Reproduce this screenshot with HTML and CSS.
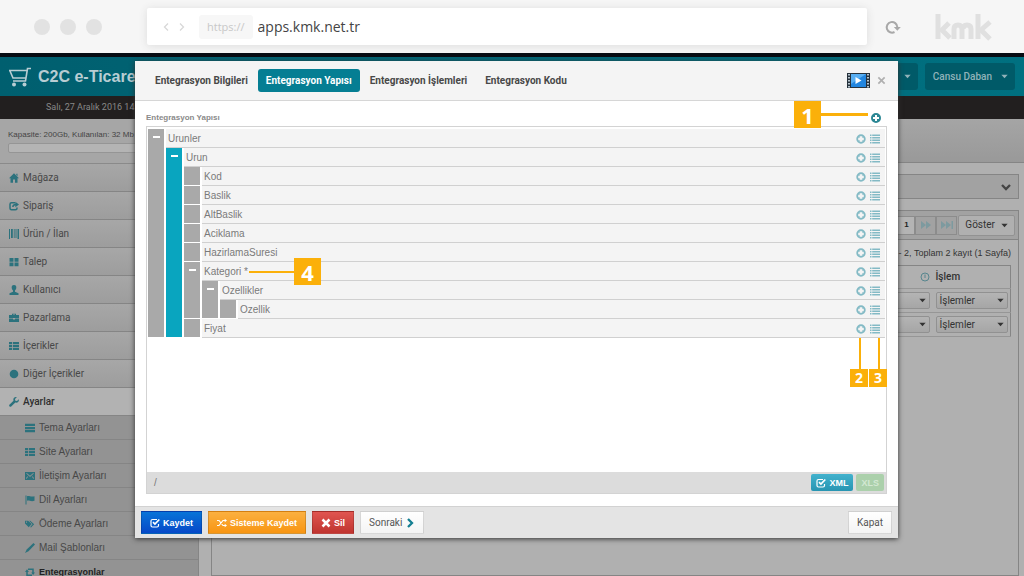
FILE: index.html
```html
<!DOCTYPE html>
<html lang="tr">
<head>
<meta charset="utf-8">
<title>C2C e-Ticaret</title>
<link rel="stylesheet" href="styles.css">
</head>
<body>
<svg class="sprite" aria-hidden="true">
  <symbol id="plus" viewBox="0 0 10 10"><path fill-rule="evenodd" d="M5 0a5 5 0 1 0 0 10A5 5 0 0 0 5 0zM4 2h2v2h2v2H6v2H4V6H2V4h2z"/></symbol>
  <symbol id="plus-open" viewBox="0 0 10 10"><path fill-rule="evenodd" d="M5 .3a4.700 4.700 0 1 0 0 9.400A4.700 4.700 0 0 0 5 .3zM3.700 2.200h2.600v1.500h1.500v2.600H6.300v1.500H3.700V6.300H2.200V3.700h1.500z"/></symbol>
  <symbol id="list" viewBox="0 0 10 10"><path d="M0 .5h1.500v1.500H0zM2.200 .5H10v1.500H2.200zM0 3h1.500v1.500H0zM2.200 3H10v1.500H2.200zM0 5.500h1.500V7H0zM2.200 5.500H10V7H2.200zM0 8h1.500v1.500H0zM2.200 8H10v1.500H2.200z"/></symbol>
  <symbol id="home" viewBox="0 0 10 10"><path d="M5 .3 10 5.300H8.500V9.700H6V6.500H4v3.200H1.500V5.300H0zM7.300.8h1.200v2.500L7.300 2z"/></symbol>
  <symbol id="share" viewBox="0 0 10 10"><path d="M6 1.800H2.500Q1 1.800 1 3.300v4Q1 8.800 2.500 8.800h4Q8 8.800 8 7.300V6.500M3.800 6Q4 3.500 7 3.500" fill="none" stroke="currentColor" stroke-width="1.500"/><path d="M6.300.8 10 3.500 6.300 6.200z"/></symbol>
  <symbol id="barcode" viewBox="0 0 10 10"><path d="M0 0h1v10H0zM2 0h1.800v9H2zM4.800 0h.8v9h-.8zM6.500 0h1v9h-1zM8.500 0H10v10H8.500z"/></symbol>
  <symbol id="grid" viewBox="0 0 10 10"><path d="M.5 1h4v3.700h-4zM5.500 1h4v3.700h-4zM.5 5.500h4v3.700h-4zM5.500 5.500h4v3.700h-4z"/></symbol>
  <symbol id="user" viewBox="0 0 10 10"><path d="M5 0c1.800 0 2.500 1.300 2.300 2.800C7.200 4.200 6.500 5 6 5.500v1.200l3.500 1.600V10h-9V8.300L4 6.700V5.500C3.500 5 2.800 4.200 2.700 2.800 2.500 1.300 3.200 0 5 0z"/></symbol>
  <symbol id="case" viewBox="0 0 10 10"><path fill-rule="evenodd" d="M3 2V.7h4V2h3v3H0V2zM4 1.500V2h2v-.5zM0 5.500h4V6.500h2V5.500h4V9H0z"/></symbol>
  <symbol id="thlist" viewBox="0 0 10 10"><path d="M0 1h3v2.200H0zM3.800 1H10v2.200H3.800zM0 3.900h3v2.200H0zM3.800 3.900H10v2.200H3.800zM0 6.800h3V9H0zM3.800 6.800H10V9H3.800z"/></symbol>
  <symbol id="dot" viewBox="0 0 10 10"><circle cx="5" cy="5" r="4.300"/></symbol>
  <symbol id="wrench" viewBox="0 0 10 10"><path d="M9.800 2.200 8 4 6.300 3.700 6 2 7.800.2C5.500-.4 3.800 1.500 4.500 3.700L.4 7.800c-.9 1 .8 2.700 1.800 1.800l4.100-4.100c2.200.7 4.100-1 3.500-3.300z"/></symbol>
  <symbol id="server" viewBox="0 0 10 10"><path d="M0 .8h10v2.300H0zM0 3.900h10v2.300H0zM0 7h10v2.300H0z"/></symbol>
  <symbol id="mail" viewBox="0 0 10 10"><path fill-rule="evenodd" d="M0 1h10v8H0zM1.200 2.500 5 6l3.800-3.500-.6-.5L5 4.700 1.800 2zM1.200 8l2-2.200-.5-.5L1 7zM8.800 8l-2-2.200.5-.5L9 7z"/></symbol>
  <symbol id="flag" viewBox="0 0 10 10"><path d="M.5.500h1V9.500h-1zM2 1.200c2-1 3.500 1 7.500 0v4.600c-4 1.200-5.500-1-7.500 0z"/></symbol>
  <symbol id="tags" viewBox="0 0 12 10"><path fill-rule="evenodd" d="M0 1h3.800l4.200 4L4.500 8.800 0 4.500zM1.800 2a.7.700 0 1 0 .1 0z"/><path d="M5 1h1.300l4.700 4.300-3.800 4-1-.8L9 5.300z"/></symbol>
  <symbol id="pencil" viewBox="0 0 10 10"><path d="M8.500 0 10 1.500 3.500 8.200 0 10l1.700-3.500z"/></symbol>
  <symbol id="retweet" viewBox="0 0 10 10"><path d="M3 2.200h5V6M7 8.200H2V4.500" fill="none" stroke="currentColor" stroke-width="1.500"/><path d="M6.200 5.500H10L8.100 8zM0 5h3.900L2 2.300z"/></symbol>
  <symbol id="check" viewBox="0 0 10 10"><path d="M7 1.500H2.500Q1 1.500 1 3v4.500Q1 9 2.500 9H7q1.500 0 1.500-1.500V6" fill="none" stroke="currentColor" stroke-width="1.200"/><path d="M3 4.200 4.900 6 9.300 1.500" fill="none" stroke="currentColor" stroke-width="1.700"/></symbol>
  <symbol id="shuffle" viewBox="0 0 10 10"><path d="M0 2.500h2L6 7.500h2.500M0 7.500h2L6 2.500h2.500" fill="none" stroke="currentColor" stroke-width="1.200"/><path d="M7.700.7 10 2.500 7.700 4.300zM7.700 5.700 10 7.500 7.700 9.300z"/></symbol>
  <symbol id="cross" viewBox="0 0 10 10"><path d="m1.500 1.500 7 7m0-7-7 7" fill="none" stroke="currentColor" stroke-width="2.500"/></symbol>
  <symbol id="cross-thin" viewBox="0 0 10 10"><path d="m1.500 1.500 7 7m0-7-7 7" fill="none" stroke="currentColor" stroke-width="1.900"/></symbol>
  <symbol id="chev" viewBox="0 0 10 10"><path d="m3 1 4 4-4 4" fill="none" stroke="currentColor" stroke-width="2.300"/></symbol>
  <symbol id="thin" viewBox="0 0 10 10"><path d="M3 1.500 6.500 5 3 8.500" fill="none" stroke="currentColor" stroke-width="1.300"/></symbol>
  <symbol id="caret" viewBox="0 0 10 10"><path d="M.5 2.500h9L5 7.500z"/></symbol>
</svg>

<header class="browser">
  <div class="dots"><i></i><i></i><i></i></div>
  <div class="address">
    <button class="nav-arrow" aria-label="Geri"><svg class="icon flip"><use href="#thin"/></svg></button>
    <button class="nav-arrow" aria-label="İleri"><svg class="icon"><use href="#thin"/></svg></button>
    <label class="scheme" for="url">https://</label>
    <input id="url" class="url" type="text" value="apps.kmk.net.tr">
  </div>
  <button class="reload" aria-label="Yenile"><svg viewBox="0 0 16 16"><path d="M9.500 13A5.300 5.300 0 1 1 12.300 8" fill="none" stroke="currentColor" stroke-width="2"/><path d="M8.800 8h7l-3.500 3.700z"/></svg></button>
  <svg class="logo" viewBox="0 0 58 28" role="img" aria-label="kmk"><g fill="none" stroke="currentColor" stroke-width="5"><path d="M3 1v25"/><path d="m14 10-7 7 8 8"/><path d="M19 26V16q0-4 4-4t4 4v10M28 16q0-4 4-4t4 4v10"/><path d="M43 1v25"/><path d="m55 9-9 8 9 9"/></g></svg>
</header>

<div class="app">
  <div class="topbar">
    <svg class="cart" viewBox="0 0 24 20"><path d="M23 1.500h-3.500L17.500 14H5M1 3.500h18M2 4l3 7h13" fill="none" stroke="currentColor" stroke-width="1.600"/><circle cx="6" cy="17.500" r="2"/><circle cx="16.500" cy="17.500" r="2"/></svg>
    <h1 class="brand">C2C e-Ticaret</h1>
    <button class="top-btn short" aria-label="Menü"><svg class="caret"><use href="#caret"/></svg></button>
    <button class="top-btn">Cansu Daban <svg class="caret"><use href="#caret"/></svg></button>
  </div>
  <div class="datebar">Salı, 27 Aralık 2016 14:25</div>
  <div class="columns">
    <aside class="sidebar">
      <div class="capacity"><span>Kapasite: 200Gb, Kullanılan: 32 Mb</span><div class="meter"></div></div>
      <nav>
        <a href="#" class="item"><svg class="icon"><use href="#home"/></svg>Mağaza</a>
        <a href="#" class="item"><svg class="icon"><use href="#share"/></svg>Sipariş</a>
        <a href="#" class="item"><svg class="icon"><use href="#barcode"/></svg>Ürün / İlan</a>
        <a href="#" class="item"><svg class="icon"><use href="#grid"/></svg>Talep</a>
        <a href="#" class="item"><svg class="icon"><use href="#user"/></svg>Kullanıcı</a>
        <a href="#" class="item"><svg class="icon"><use href="#case"/></svg>Pazarlama</a>
        <a href="#" class="item"><svg class="icon"><use href="#thlist"/></svg>İçerikler</a>
        <a href="#" class="item"><svg class="icon"><use href="#dot"/></svg>Diğer İçerikler</a>
        <a href="#" class="item open"><svg class="icon"><use href="#wrench"/></svg>Ayarlar</a>
        <a href="#" class="sub"><svg class="icon"><use href="#server"/></svg>Tema Ayarları</a>
        <a href="#" class="sub"><svg class="icon"><use href="#thlist"/></svg>Site Ayarları</a>
        <a href="#" class="sub"><svg class="icon"><use href="#mail"/></svg>İletişim Ayarları</a>
        <a href="#" class="sub"><svg class="icon"><use href="#flag"/></svg>Dil Ayarları</a>
        <a href="#" class="sub"><svg class="icon"><use href="#tags"/></svg>Ödeme Ayarları</a>
        <a href="#" class="sub"><svg class="icon"><use href="#pencil"/></svg>Mail Şablonları</a>
        <a href="#" class="sub current"><svg class="icon"><use href="#retweet"/></svg>Entegrasyonlar</a>
      </nav>
    </aside>
    <main class="content">
      <div class="heading"></div>
      <div class="panels">
        <button class="filter" aria-label="Filtre"><svg class="icon down"><use href="#chev"/></svg></button>
        <section class="results">
          <div class="pager">
            <button class="page on">1</button>
            <button class="page" aria-label="Sonraki sayfa"><svg viewBox="0 0 12 10"><path d="m1 1 5 4-5 4zM6 1l5 4-5 4z"/></svg></button>
            <button class="page" aria-label="Son sayfa"><svg viewBox="0 0 12 10"><path d="m0 1 5 4-5 4zM5 1l5 4-5 4zM10.500 1H12v8h-1.500z"/></svg></button>
            <button class="show">Göster <svg class="caret"><use href="#caret"/></svg></button>
          </div>
          <p class="count">1 - 2, Toplam 2 kayıt (1 Sayfa)</p>
          <table class="grid">
            <thead><tr><th></th><th><svg class="icon clock" viewBox="0 0 10 10"><circle cx="5" cy="5" r="4" fill="none" stroke="currentColor"/><path d="M4.500 2.500h1V6h-1z"/></svg></th><th>İşlem</th></tr></thead>
            <tbody>
              <tr><td></td><td><button class="drop" aria-label="Durum"><span></span><svg class="caret"><use href="#caret"/></svg></button></td><td><button class="drop">İşlemler <svg class="caret"><use href="#caret"/></svg></button></td></tr>
              <tr><td></td><td><button class="drop" aria-label="Durum"><span></span><svg class="caret"><use href="#caret"/></svg></button></td><td><button class="drop">İşlemler <svg class="caret"><use href="#caret"/></svg></button></td></tr>
            </tbody>
          </table>
        </section>
      </div>
    </main>
  </div>

  <div class="modal" role="dialog" aria-label="Entegrasyon">
    <div class="modal-head">
      <button class="tab">Entegrasyon Bilgileri</button>
      <button class="tab active">Entegrasyon Yapısı</button>
      <button class="tab">Entegrasyon İşlemleri</button>
      <button class="tab">Entegrasyon Kodu</button>
      <svg class="video" viewBox="0 0 23 15"><path fill="#26323d" d="M0 0h23v15H0z"/><path fill="#2286e0" d="M4 1h15v13H4z"/><path fill="#58aef2" d="M4 1h15L4 11z"/><path fill="#fff" d="m8.500 4 6 3.500-6 3.500z"/><path d="M2 1v14M21 1v14" stroke="#b8c6d0" stroke-width="2" stroke-dasharray="1.500 1.500"/></svg>
      <button class="close" aria-label="Kapat"><svg class="icon"><use href="#cross-thin"/></svg></button>
    </div>
    <div class="modal-body">
      <div class="label-row">
        <span>Entegrasyon Yapısı</span>
        <span class="note note-1">1</span>
        <button class="act strong" aria-label="Ekle"><svg class="icon"><use href="#plus"/></svg></button>
      </div>
      <div class="editor">
        <ul class="tree" id="tree"></ul>
        <div class="status"><span>/</span>
          <button class="fmt xml"><svg class="icon"><use href="#check"/></svg>XML</button>
          <button class="fmt xls">XLS</button>
        </div>
      </div>
    </div>
    <div class="modal-foot">
      <button class="btn blue"><svg class="icon"><use href="#check"/></svg>Kaydet</button>
      <button class="btn orange"><svg class="icon"><use href="#shuffle"/></svg>Sisteme Kaydet</button>
      <button class="btn red"><svg class="icon"><use href="#cross"/></svg>Sil</button>
      <button class="btn plain">Sonraki<svg class="icon teal"><use href="#chev"/></svg></button>
      <button class="btn plain last">Kapat</button>
    </div>
  </div>
</div>
<script src="tree.js"></script>
</body>
</html>
```
FILE: styles.css
```css
* { box-sizing: border-box; }
body { margin: 0; height: 100vh; overflow: hidden; display: flex; flex-direction: column; background: #b0b0b0; color: #444; font: 10px/12px "Liberation Sans", Arial, sans-serif; }
button { font: inherit; color: inherit; border: 0; background: none; padding: 0; margin: 0; display: inline-flex; align-items: center; white-space: nowrap; }
ul { list-style: none; margin: 0; padding: 0; }
a { color: inherit; text-decoration: none; }
svg { fill: currentColor; flex: none; }
.sprite { position: absolute; width: 0; height: 0; }
.icon { width: 10px; height: 10px; }
.caret { width: 7px; height: 7px; }
.flip { transform: scaleX(-1); }
.down { transform: rotate(90deg); }

.browser { display: flex; align-items: center; height: 53px; flex: none; background: #f6f6f6; padding: 0 31px 0 34px; }
.dots { display: flex; gap: 10px; width: 113px; flex: none; }
.dots i { width: 16px; height: 16px; border-radius: 50%; background: #e2e2e2; }
.address { flex: 1; display: flex; align-items: center; height: 37px; padding-left: 14px; background: #fff; border-radius: 2px; box-shadow: 0 1px 8px #dcdcdc; }
.nav-arrow { color: #d8d8d8; width: 16px; }
.scheme { margin-left: 6px; padding: 0 8px; height: 24px; line-height: 23px; border-radius: 3px; background: #f7f7f7; color: #c8c8c8; font-family: "Open Sans", sans-serif; font-size: 11px; }
.url { flex: 1; border: 0; padding: 0; margin-left: 5px; background: none; color: #444; font: 14px/20px "Open Sans", sans-serif; outline: 0; }
.reload { margin: 0 34px 0 18px; color: #a8a8a8; }
.reload svg { width: 16px; height: 16px; }
.logo { width: 58px; height: 28px; color: #e0e0e0; }

.app { position: relative; flex: 1; display: flex; flex-direction: column; border-top: 4px solid #060b12; overflow: hidden; }
.topbar { display: flex; align-items: center; height: 39px; flex: none; padding: 0 9px 0 8px; background: linear-gradient(90deg, #005f6f, #007080); color: #b8cdd3; }
.cart { width: 24px; height: 20px; }
.brand { flex: 1; margin: 0 0 0 6px; font-size: 16px; line-height: 20px; }
.top-btn { height: 27px; padding: 0 7px 0 8px; gap: 9px; border-radius: 3px; background: #005a68; color: #91b2b9; font-family: Roboto, sans-serif; font-weight: 500; }
.top-btn.short { margin-right: 7px; width: 36px; justify-content: flex-end; }
.datebar { height: 23px; flex: none; padding-left: 46px; line-height: 23px; background: #221f1f; color: #888; font-family: Roboto, sans-serif; font-size: 9px; }

.columns { flex: 1; display: flex; min-height: 0; }
.sidebar { width: 199px; flex: none; overflow: hidden; background: #9a9a9a; border-right: 1px solid #858585; }
.capacity { height: 45px; padding: 10px 8px 0; background: #a6a6a6; border-bottom: 1px solid #8a8a8a; font-size: 8px; color: #444; }
.meter { height: 10px; margin-top: 2px; background: #b4b4b4; border: 1px solid #959595; border-radius: 2px; }
.item, .sub { display: flex; align-items: center; border-bottom: 1px solid #858585; color: #484848; font-family: Roboto, sans-serif; }
.item { height: 28px; gap: 4px; padding-left: 9px; background: linear-gradient(#a7a7a7, #9d9d9d); }
.item .icon, .sub .icon { color: #2c727d; }
.item.open { background: #b2b2b2; font-weight: 500; color: #2f2f2f; }
.sub { height: 24px; gap: 4px; padding-left: 25px; background: #939393; font-family: "Liberation Sans", Arial, sans-serif; }
.sub.current { font-weight: bold; font-size: 9px; color: #222; }

.content { flex: 1; display: flex; flex-direction: column; }
.heading { height: 44px; flex: none; background: linear-gradient(#a5a5a5, #999); border-bottom: 1px solid #858585; }
.panels { flex: 1; display: flex; flex-direction: column; gap: 11px; padding: 11px 5px 0 12px; }
.filter { height: 25px; justify-content: flex-end; padding-right: 7px; background: #a2a2a2; border: 1px solid #858585; color: #444; }
.results { flex: 1; border: 1px solid #858585; }
.pager { display: flex; justify-content: flex-end; align-items: center; height: 29px; padding-right: 3px; background: #a2a2a2; border-bottom: 1px solid #858585; }
.page { justify-content: center; width: 21px; height: 19px; border: 1px solid #8c8c8c; color: #7d9a9f; }
.page svg { width: 12px; height: 10px; }
.page.on { background: #b4b4b4; color: #222; font-weight: bold; font-size: 8px; width: 18px; }
.show { height: 21px; margin-left: 1px; padding: 0 6px; gap: 6px; background: #b0b0b0; border: 1px solid #929292; border-radius: 2px; color: #333; font-family: Roboto, sans-serif; }
.count { margin: 7px 7px 6px; text-align: right; font-size: 9px; color: #333; }
.grid { width: calc(100% - 15px); margin: 0 7px 0 8px; border: 1px solid #858585; border-collapse: collapse; table-layout: fixed; }
.grid th, .grid td { height: 24px; padding: 0 3px; border-bottom: 1px solid #969696; text-align: left; font-family: Roboto, sans-serif; color: #333; }
.grid th { height: 23px; font-weight: 500; }
.grid th:nth-child(2), .grid th:nth-child(3) { width: 78px; }
.grid th:nth-child(2) { text-align: right; }
.clock { color: #57868e; vertical-align: middle; }
.drop { width: 72px; height: 17px; padding: 0 3px; justify-content: space-between; background: linear-gradient(#b4b4b4, #a6a6a6); border: 1px solid #919191; border-radius: 2px; vertical-align: middle; }

.modal { position: absolute; top: 4px; left: 135px; right: 126px; bottom: 38px; display: flex; flex-direction: column; background: #fff; box-shadow: 0 1px 5px #333; }
.modal-head { display: flex; align-items: center; height: 40px; flex: none; padding: 0 12px; gap: 2px; background: #f4f4f4; border-bottom: 1px solid #d6d6d6; }
.tab { height: 23px; padding: 0 8px; border-radius: 3px; font: bold 10px/12px Roboto, sans-serif; color: #484848; }
.tab.active { background: #057e93; color: #fff; }
.video { width: 23px; height: 15px; margin-left: auto; }
.close { margin-left: 5px; color: #b0b0b0; }
.close .icon { width: 9px; height: 9px; }
.modal-body { flex: 1; display: flex; flex-direction: column; min-height: 0; padding: 0 11px 12px; }
.label-row { position: relative; display: flex; align-items: center; justify-content: space-between; height: 25px; padding: 8px 6px 0 0; font-size: 8px; font-weight: bold; color: #8a8a8a; }
.act { color: #83bac5; }
.act.strong { color: #2b8794; }
.editor { flex: 1; display: flex; flex-direction: column; border: 1px solid #d3d3d3; }
.tree { flex: 1; padding: 2px 1px 0; }
.node { display: grid; grid-template-columns: 16px 1fr; column-gap: 2px; }
.handle { grid-row: 1 / 3; justify-content: center; align-items: flex-start; padding-top: 7px; margin-bottom: 1px; background: #a9a9a9; }
.handle.selected { background: #09a5bf; }
.handle i { width: 7px; height: 2px; background: #fff; }
.row { position: relative; display: flex; align-items: center; gap: 4px; height: 19px; padding: 1px 5px 0 2px; background: #f4f4f4; border-bottom: 1px solid #d0d0d0; color: #7a7a7a; }
.row .name { flex: 1; }
.node .node-children { grid-column: 2; }

.note { position: absolute; z-index: 1; display: grid; place-items: center; width: 27px; height: 27px; background: #fbb00a; color: #fff; font: bold 22px/24px "Open Sans", sans-serif; }
.note::before { content: ""; position: absolute; background: #fbb00a; }
.note-1 { top: 0; right: 66px; }
.note-1::before { left: 100%; top: 12px; width: 47px; height: 3px; }
.note-4 { top: -4px; left: 92px; }
.note-4::before { right: 100%; top: 13px; width: 45px; height: 2px; }
.note-2, .note-3 { top: 50px; width: 18px; height: 18px; font-size: 14px; line-height: 18px; }
.note-2 { right: 17px; }
.note-3 { right: -2px; }
.note-2::before, .note-3::before { bottom: 100%; left: 9px; width: 2px; height: 31px; }

.status { display: flex; align-items: center; gap: 3px; height: 21px; padding: 0 2px 0 7px; background: #dcdcdc; color: #777; }
.status span { flex: 1; }
.fmt { height: 17px; padding: 0 5px; gap: 3px; border-radius: 2px; font-size: 9px; font-weight: bold; color: #fff; }
.xml { background: linear-gradient(#42b2cd, #2795b2); }
.xls { background: #abd0ab; color: #d3e8d3; }
.modal-foot { display: flex; align-items: center; gap: 6px; height: 32px; flex: none; padding: 0 6px; background: #e4e4e4; border-top: 1px solid #d2d2d2; }
.btn { height: 23px; padding: 0 8px; gap: 3px; border: 1px solid rgba(0,0,0,.15); font-size: 9px; font-weight: bold; color: #fff; }
.blue { background: linear-gradient(#0874d8, #0648c8); }
.orange { background: linear-gradient(#fbb040, #f89512); }
.red { background: linear-gradient(#e05550, #c03530); }
.plain { background: linear-gradient(#fff, #f4f4f4); color: #555; font: 10px/12px Roboto, sans-serif; }
.teal { color: #147f92; }
.last { margin-left: auto; }
```
FILE: tree.js
```javascript
const data = {
  name: 'Urunler',
  children: [{
    name: 'Urun', selected: true,
    children: [
      { name: 'Kod' }, { name: 'Baslik' }, { name: 'AltBaslik' }, { name: 'Aciklama' }, { name: 'HazirlamaSuresi' },
      { name: 'Kategori *', notes: [4], children: [{ name: 'Ozellikler', children: [{ name: 'Ozellik' }] }] },
      { name: 'Fiyat', notes: [2, 3] }
    ]
  }]
};

function render(node) {
  const notes = (node.notes || []).map(n => `<span class="note note-${n}">${n}</span>`).join('');
  const children = node.children
    ? `<ul class="node-children">${node.children.map(render).join('')}</ul>` : '';
  return `<li class="node">
    <button class="handle${node.selected ? ' selected' : ''}" aria-label="${node.name}">${node.children ? '<i></i>' : ''}</button>
    <div class="row"><span class="name">${node.name}</span>
      <button class="act" aria-label="Ekle"><svg class="icon"><use href="#plus-open"/></svg></button>
      <button class="act" aria-label="Liste"><svg class="icon"><use href="#list"/></svg></button>${notes}
    </div>${children}</li>`;
}

document.getElementById('tree').innerHTML = render(data);
```
